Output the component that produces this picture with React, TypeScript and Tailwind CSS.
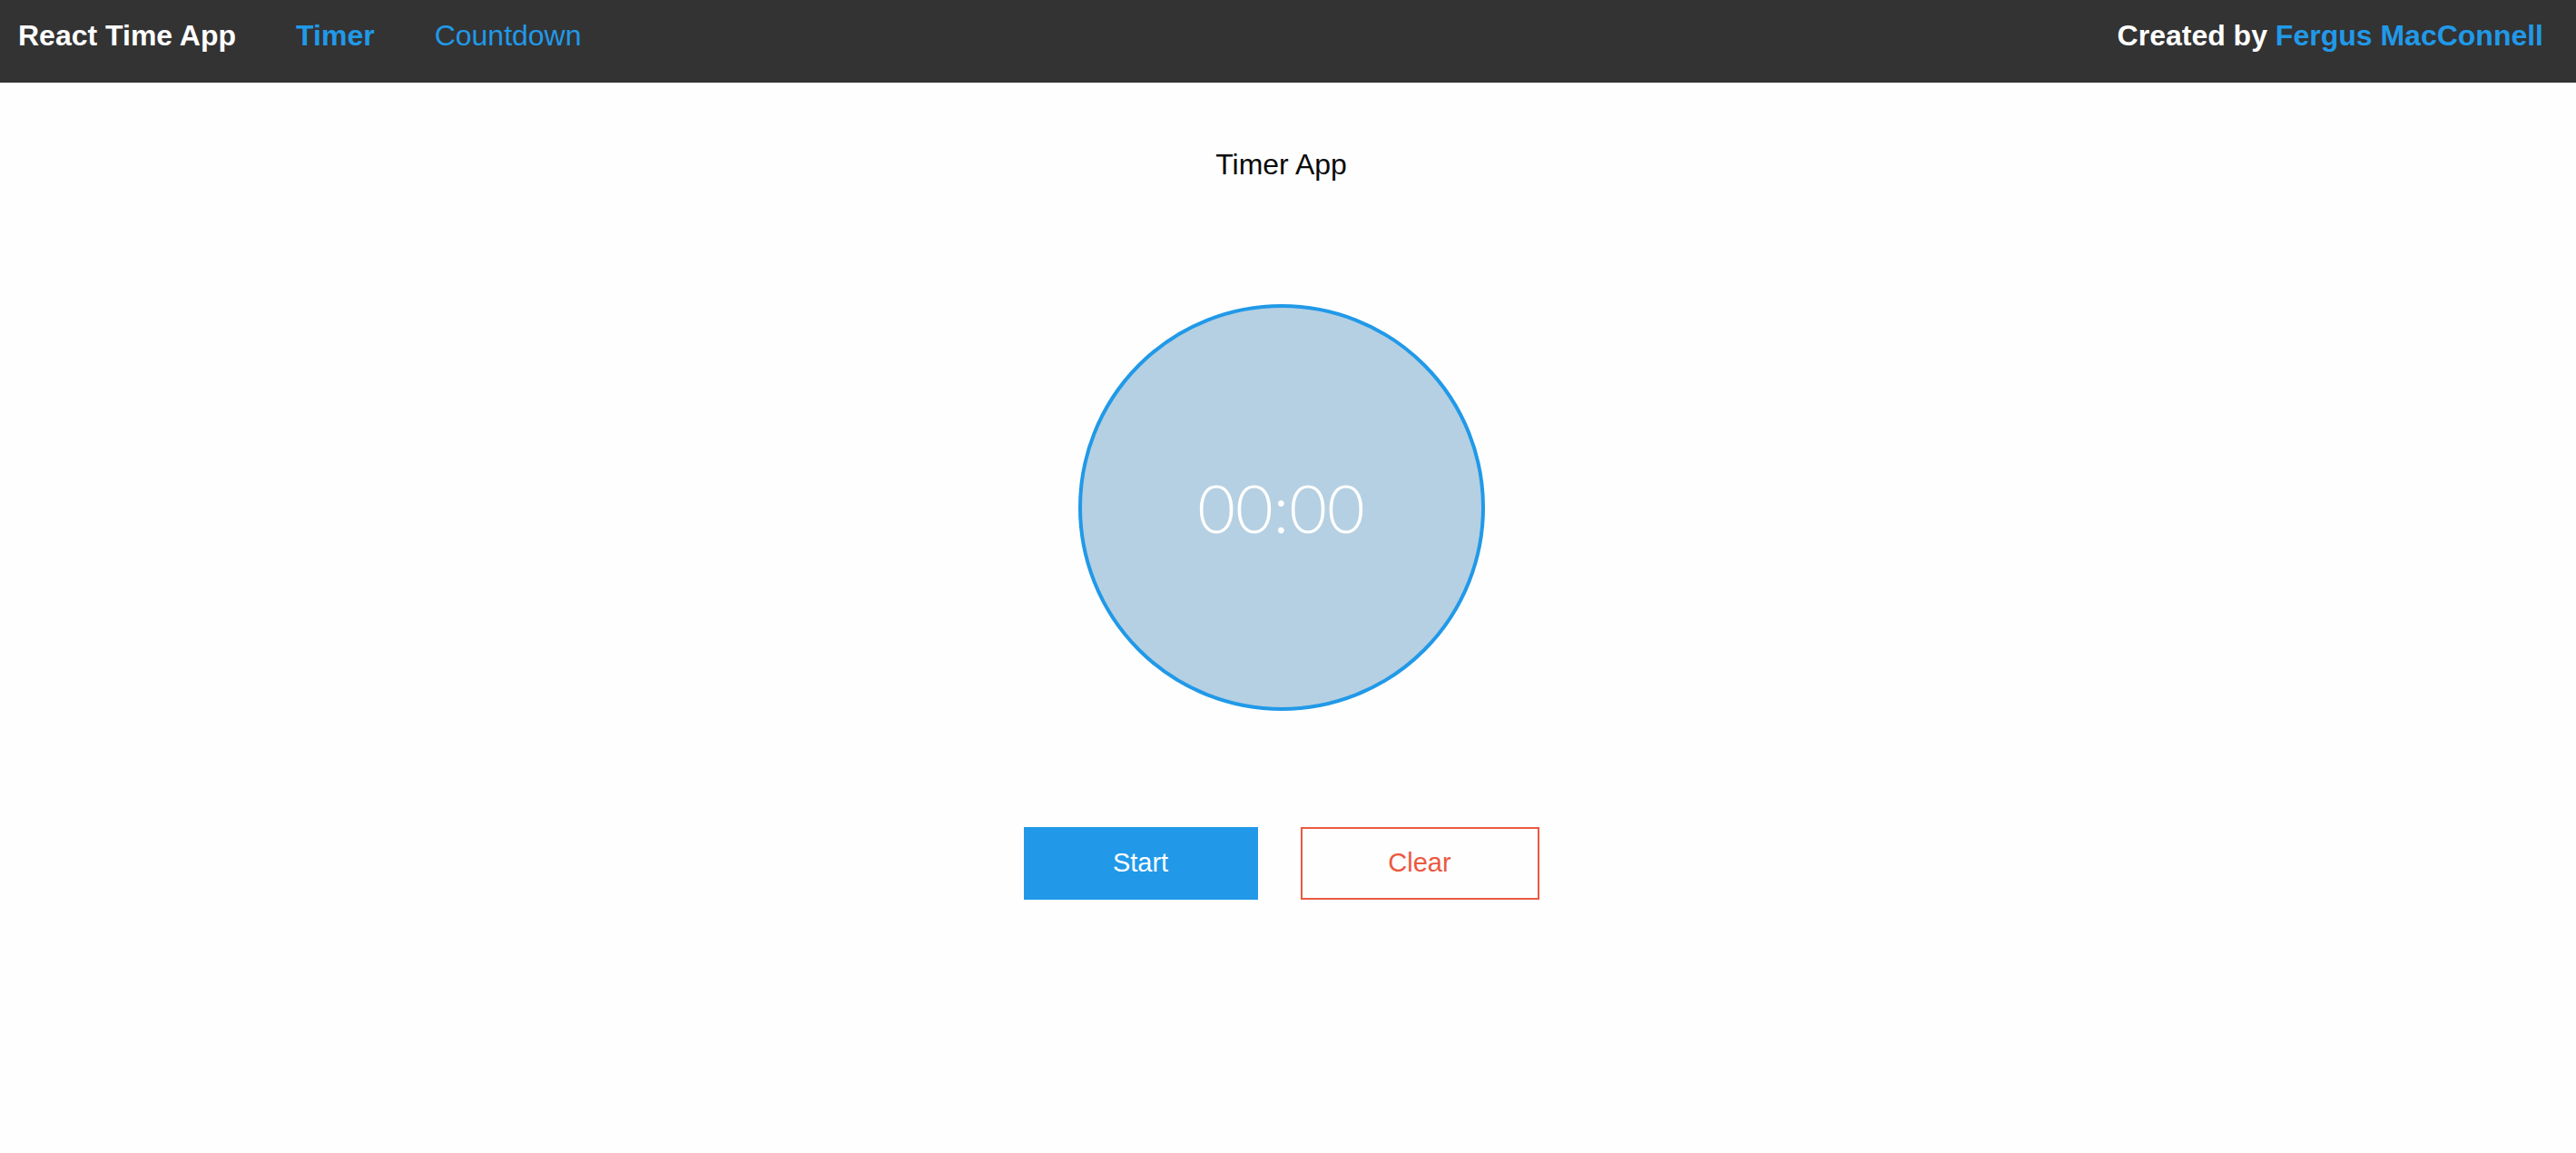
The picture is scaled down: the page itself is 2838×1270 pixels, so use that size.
import React from 'react';

const sans = "font-['Helvetica_Neue','Liberation_Sans',Arial,sans-serif]";

function Nav() {
  return (
    <div className={`flex h-[91px] items-start justify-between bg-[#333333] pl-[20px] pr-[36px] pt-[23px] text-[32px] leading-[32px] ${sans}`}>
      <ul className="flex items-start gap-[66px]">
        <li className="font-bold text-white">React Time App</li>
        <li>
          <a href="#" className="font-bold text-[#2199e8]">Timer</a>
        </li>
        <li>
          <a href="#" className="text-[#2199e8]">Countdown</a>
        </li>
      </ul>
      <div className="font-bold text-white">
        Created by <a href="#" className="text-[#2199e8]">Fergus MacConnell</a>
      </div>
    </div>
  );
}

function Clock({ seconds }: { seconds: number }) {
  const mm = String(Math.floor(seconds / 60)).padStart(2, '0');
  const ss = String(seconds % 60).padStart(2, '0');
  return (
    <div className="flex h-[448px] w-[448px] items-center justify-center rounded-full border-[4px] border-[#2199e8] bg-[#b5d0e2]">
      <span className="font-['Lato','Roboto',sans-serif] text-[72px] font-light leading-none text-white">
        {mm}:{ss}
      </span>
    </div>
  );
}

export default function App() {
  return (
    <div className={`min-h-[1270px] bg-[#fefefe] text-[#0a0a0a] ${sans}`}>
      <Nav />
      <main className="flex flex-col items-center pr-[15px] pt-[66px]">
        <h1 className="text-[32px] leading-[48px]">Timer App</h1>
        <div className="mt-[130px]">
          <Clock seconds={0} />
        </div>
        <div className="mt-[128px] flex gap-[47px]">
          <button className="h-[80px] w-[258px] bg-[#2199e8] text-[29px] text-white">Start</button>
          <button className="h-[80px] w-[263px] border-[2px] border-[#ec5840] text-[29px] text-[#ec5840]">
            Clear
          </button>
        </div>
      </main>
    </div>
  );
}
